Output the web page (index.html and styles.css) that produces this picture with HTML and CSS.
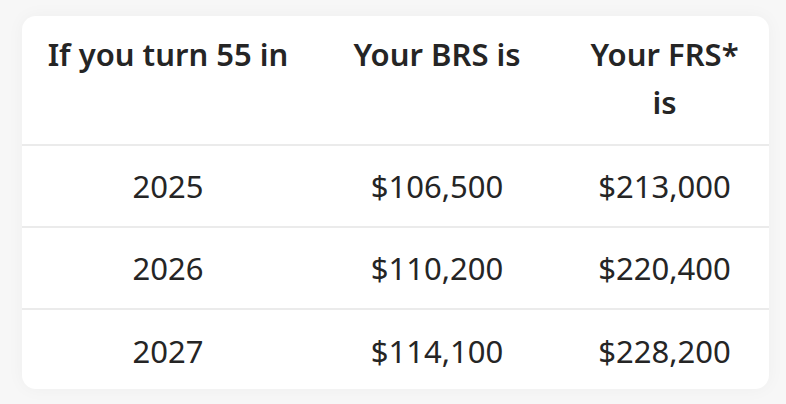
FILE: index.html
```html
<!DOCTYPE html>
<html lang="en">
<head>
<meta charset="utf-8">
<title>BRS and FRS</title>
<link rel="stylesheet" href="styles.css">
</head>
<body>
<div class="card">
  <table class="rs-table">
    <colgroup>
      <col class="col-year">
      <col class="col-brs">
      <col class="col-frs">
    </colgroup>
    <thead>
      <tr>
        <th>If you turn 55 in</th>
        <th>Your BRS is</th>
        <th>Your FRS* is</th>
      </tr>
    </thead>
    <tbody>
      <tr><td>2025</td><td>$106,500</td><td>$213,000</td></tr>
      <tr><td>2026</td><td>$110,200</td><td>$220,400</td></tr>
      <tr><td>2027</td><td>$114,100</td><td>$228,200</td></tr>
    </tbody>
  </table>
</div>
</body>
</html>
```

FILE: styles.css
```css
html, body {
  margin: 0;
  padding: 0;
}
body {
  background: #f7f7f7;
  font-family: "Noto Sans", "DejaVu Sans", sans-serif;
  color: #252525;
  padding: 16px 17px 15px 22px;
  height: 404px;
  box-sizing: border-box;
}
.card {
  width: 747px;
  height: 373px;
  background: #ffffff;
  border-radius: 14px;
  overflow: hidden;
  box-shadow: 0 0 18px rgba(0, 0, 0, 0.04);
}
.rs-table {
  width: 100%;
  border-collapse: collapse;
  table-layout: fixed;
}
.col-year { width: 292px; }
.col-brs { width: 246px; }
.col-frs { width: 209px; }
.rs-table th {
  font-weight: 600;
  font-size: 31px;
  line-height: 48px;
  padding: 14px 20px 18px;
  height: 128px;
  box-sizing: border-box;
  vertical-align: top;
  text-align: center;
  border-bottom: 2px solid #ebebeb;
}
.rs-table td {
  font-weight: 400;
  font-size: 31px;
  line-height: 40px;
  height: 82px;
  padding: 0 20px;
  box-sizing: border-box;
  text-align: center;
  vertical-align: middle;
  border-bottom: 2px solid #ebebeb;
}
.rs-table tbody tr:last-child td {
  border-bottom: none;
}
```
